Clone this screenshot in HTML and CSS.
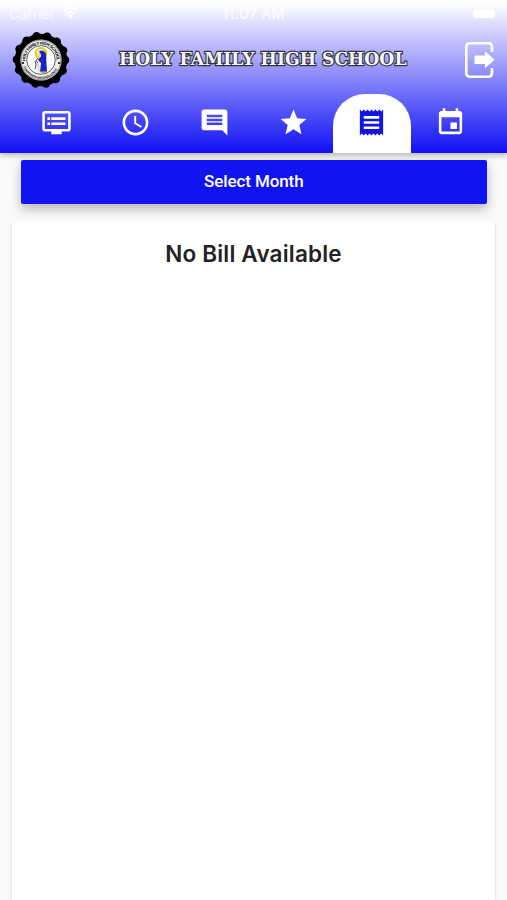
FILE: index.html
```html
<!DOCTYPE html>
<html lang="en">
<head>
<meta charset="utf-8">
<title>Holy Family High School</title>
<link rel="stylesheet" href="styles.css">
</head>
<body>
<header class="header">
  <div class="status">
    <div class="carrier"><span>Carrier</span>
      <svg width="17" height="12" viewBox="0 0 18 13"><path d="M9 13 6 9.600a4.500 4.500 0 0 1 6 0z" fill="#fff"/><path d="M4 7.400a7.400 7.400 0 0 1 10 0M1.500 4.400a11 11 0 0 1 15 0" fill="none" stroke="#fff" stroke-width="2.700"/></svg>
    </div>
    <span class="time">11:07 AM</span>
    <span class="battery"></span>
  </div>
  <div class="brand">
    <svg class="seal" width="58" height="58" viewBox="-29 -29 58 58">
      <circle r="26.200"/>
      <circle r="24" fill="none" stroke="#000" stroke-width="8.600" stroke-linecap="round" stroke-dasharray="0.100 10.671"/>
      <circle r="20.600" fill="#eee"/>
      <circle r="19.900" fill="none" stroke="#333" stroke-width=".5"/>
      <circle r="14.300" fill="#fff" stroke="#222" stroke-width=".7"/>
      <defs><path id="top" d="M-15.600 2a15.700 15.700 0 1 1 31.200 0"/><path id="bottom" d="M-18.300 4a18.700 18.700 0 0 0 36.600 0"/></defs>
      <text class="seal-text"><textPath href="#top" startOffset="1" textLength="50">HOLY FAMILY HIGH SCHOOL</textPath></text>
      <text class="seal-small"><textPath href="#bottom" startOffset="3" textLength="42">COMPASSION AND EXCELLENCE</textPath></text>
      <circle cx="-18" cy="3" r="1.100"/><circle cx="18" cy="3" r="1.100"/>
      <circle cx="0" cy="-6.500" r="5.300" fill="#fff" stroke="#e8cc22" stroke-width="2.300"/>
      <path d="M-2-9Q3-11 5-6L6 12Q3 13-1 12L0 3-3 0Q1-3-2-9z" fill="#1b22c5"/>
      <path d="M-3-8Q1-7 0-3l-4 1z" fill="#e6d38d"/>
      <path d="M-5 0-2 1-1 12-4 11z" fill="#ddd"/>
      <path d="M-6 1l1 4-1 4M-3-2l-2 3 2 2" fill="none" stroke="#555" stroke-width="1"/>
      <path d="M-2 12h8" stroke="#e3c92d" stroke-width="1"/>
    </svg>
    <svg class="title" width="304" height="30" viewBox="0 0 304 30"><text x="8" y="20.500" textLength="287.500" lengthAdjust="spacingAndGlyphs">HOLY FAMILY HIGH SCHOOL</text></svg>
    <svg class="logout" width="32" height="38" viewBox="0 0 32 38"><path d="M28 11V6q0-3.700-3.700-3.700H6Q2.300 2.300 2.300 6v26q0 3.700 3.700 3.700h18.300q3.700 0 3.700-3.700v-5" fill="none" stroke="#fff" stroke-width="2.600"/><path d="M11.500 14.500h9.500v-4.200L30.700 18.800 21 27.300v-4.300h-9.500q-1 0-1-1v-6.500q0-1 1-1z" fill="#fff"/></svg>
  </div>
  <nav class="tabs">
    <a class="tab"><svg viewBox="0 0 24 24"><path d="M21 3H3c-1.100 0-2 .9-2 2v12c0 1.100.9 2 2 2h5v2h8v-2h5c1.100 0 1.990-.9 1.990-2L23 5c0-1.100-.9-2-2-2zm0 14H3V5h18v12zm-2-9H8v2h11V8zm0 4H8v2h11v-2zM7 8H5v2h2V8zm0 4H5v2h2v-2z"/></svg></a>
    <a class="tab"><svg viewBox="0 0 24 24"><path d="M11.990 2C6.470 2 2 6.480 2 12s4.470 10 9.990 10C17.520 22 22 17.520 22 12S17.520 2 11.990 2zM12 20c-4.420 0-8-3.580-8-8s3.580-8 8-8 8 3.580 8 8-3.580 8-8 8zm.5-13H11v6l5.250 3.150.75-1.230-4.500-2.670z"/></svg></a>
    <a class="tab"><svg viewBox="0 0 24 24"><path d="M21.990 4c0-1.100-.89-2-1.990-2H4c-1.100 0-2 .9-2 2v12c0 1.100.9 2 2 2h14l4 4-.01-18zM18 14H6v-2h12v2zm0-3H6V9h12v2zm0-3H6V6h12v2z"/></svg></a>
    <a class="tab"><svg viewBox="0 0 24 24"><path d="M12 17.270 18.180 21l-1.640-7.030L22 9.240l-7.190-.61L12 2 9.190 8.630 2 9.240l5.460 4.730L5.820 21z"/></svg></a>
    <a class="tab active"><svg viewBox="0 0 24 24"><path d="M18 17H6v-2h12v2zm0-4H6v-2h12v2zm0-4H6V7h12v2zM3 22l1.500-1.500L6 22l1.500-1.500L9 22l1.500-1.500L12 22l1.500-1.500L15 22l1.500-1.500L18 22l1.500-1.500L21 22V2l-1.500 1.500L18 2l-1.500 1.500L15 2l-1.500 1.500L12 2l-1.500 1.500L9 2 7.500 3.500 6 2 4.500 3.500 3 2v20z"/></svg></a>
    <a class="tab"><svg viewBox="0 0 24 24"><path d="M17 12h-5v5h5v-5zM16 1v2H8V1H6v2H5c-1.110 0-1.990.9-1.990 2L3 19c0 1.100.89 2 2 2h14c1.100 0 2-.9 2-2V5c0-1.100-.9-2-2-2h-1V1h-2zm3 18H5V8h14v11z"/></svg></a>
  </nav>
</header>
<main class="content">
  <button class="month">Select Month</button>
  <section class="card"><h1>No Bill Available</h1></section>
</main>
</body>
</html>
```
FILE: styles.css
```css
* { box-sizing: border-box; }
body {
  margin: 0;
  height: 900px;
  overflow: hidden;
  display: flex;
  flex-direction: column;
  background: #fafafa;
  font-family: Inter, sans-serif;
}
.header {
  height: 152.500px;
  flex: none;
  display: flex;
  flex-direction: column;
  background: linear-gradient(#fff 0, #fff 3px, #1414f5 150px);
  box-shadow: 0 2px 6px rgba(0, 0, 0, .3);
}
.status {
  height: 28px;
  display: grid;
  grid-template-columns: 1fr auto 1fr;
  align-items: center;
  padding: 0 12px 2px 9px;
  color: rgba(255, 255, 255, .75);
  font-size: 14px;
}
.carrier { display: flex; align-items: center; gap: 7px; }
.time { font-size: 14px; font-weight: 600; letter-spacing: .3px; padding-left: 3px; }
.battery {
  justify-self: end;
  width: 22px;
  height: 9px;
  border-radius: 3px;
  background: #fff;
}
.brand {
  height: 64px;
  display: flex;
  align-items: center;
  padding: 0 11px 0 12px;
}
.title { margin-left: 41px; margin-top: -3px; }
.title text {
  font: bold 18px "DejaVu Serif", serif;
  fill: #f6f6f6;
  stroke: #333340;
  stroke-width: 2.400px;
  paint-order: stroke;
  text-rendering: geometricPrecision;
}
.logout { margin-left: auto; }
.seal-text { font: bold 4.200px "Liberation Sans", sans-serif; }
.seal-small { font: bold 3px "Liberation Sans", sans-serif; }
.tabs {
  flex: 1;
  display: flex;
  align-items: flex-end;
  padding: 0 17px 0 17.500px;
}
.tab {
  flex: 1;
  height: 59px;
  display: flex;
  justify-content: center;
  padding-top: 13px;
  border-radius: 32px 32px 0 0;
}
.tab svg { width: 31px; height: 31px; fill: #fff; }
.active { background: #fff; }
.active svg { fill: #1414e6; }
.content {
  flex: 1;
  display: flex;
  flex-direction: column;
  padding: 7.500px 12px 0;
}
.month {
  flex: none;
  height: 43.500px;
  margin: 0 8px 0 8.500px;
  padding: 0 0 1px;
  border: 0;
  border-radius: 2px;
  background: #1114f0;
  color: #fff;
  font: 500 17px Roboto, sans-serif;
  letter-spacing: -.1px;
  box-shadow: 0 5px 12px rgba(0, 0, 0, .28);
}
.card {
  flex: 1;
  margin-top: 18.500px;
  padding-top: 17px;
  position: relative;
  background: #fff;
  border-radius: 3px 3px 0 0;
  box-shadow: 0 1px 3px rgba(0, 0, 0, .18);
  clip-path: inset(0 -4px 0 -4px);
}
.card h1 {
  margin: 0;
  text-align: center;
  font-size: 22.500px;
  line-height: 30px;
  font-weight: 600;
  letter-spacing: .2px;
  color: #222;
}
```
